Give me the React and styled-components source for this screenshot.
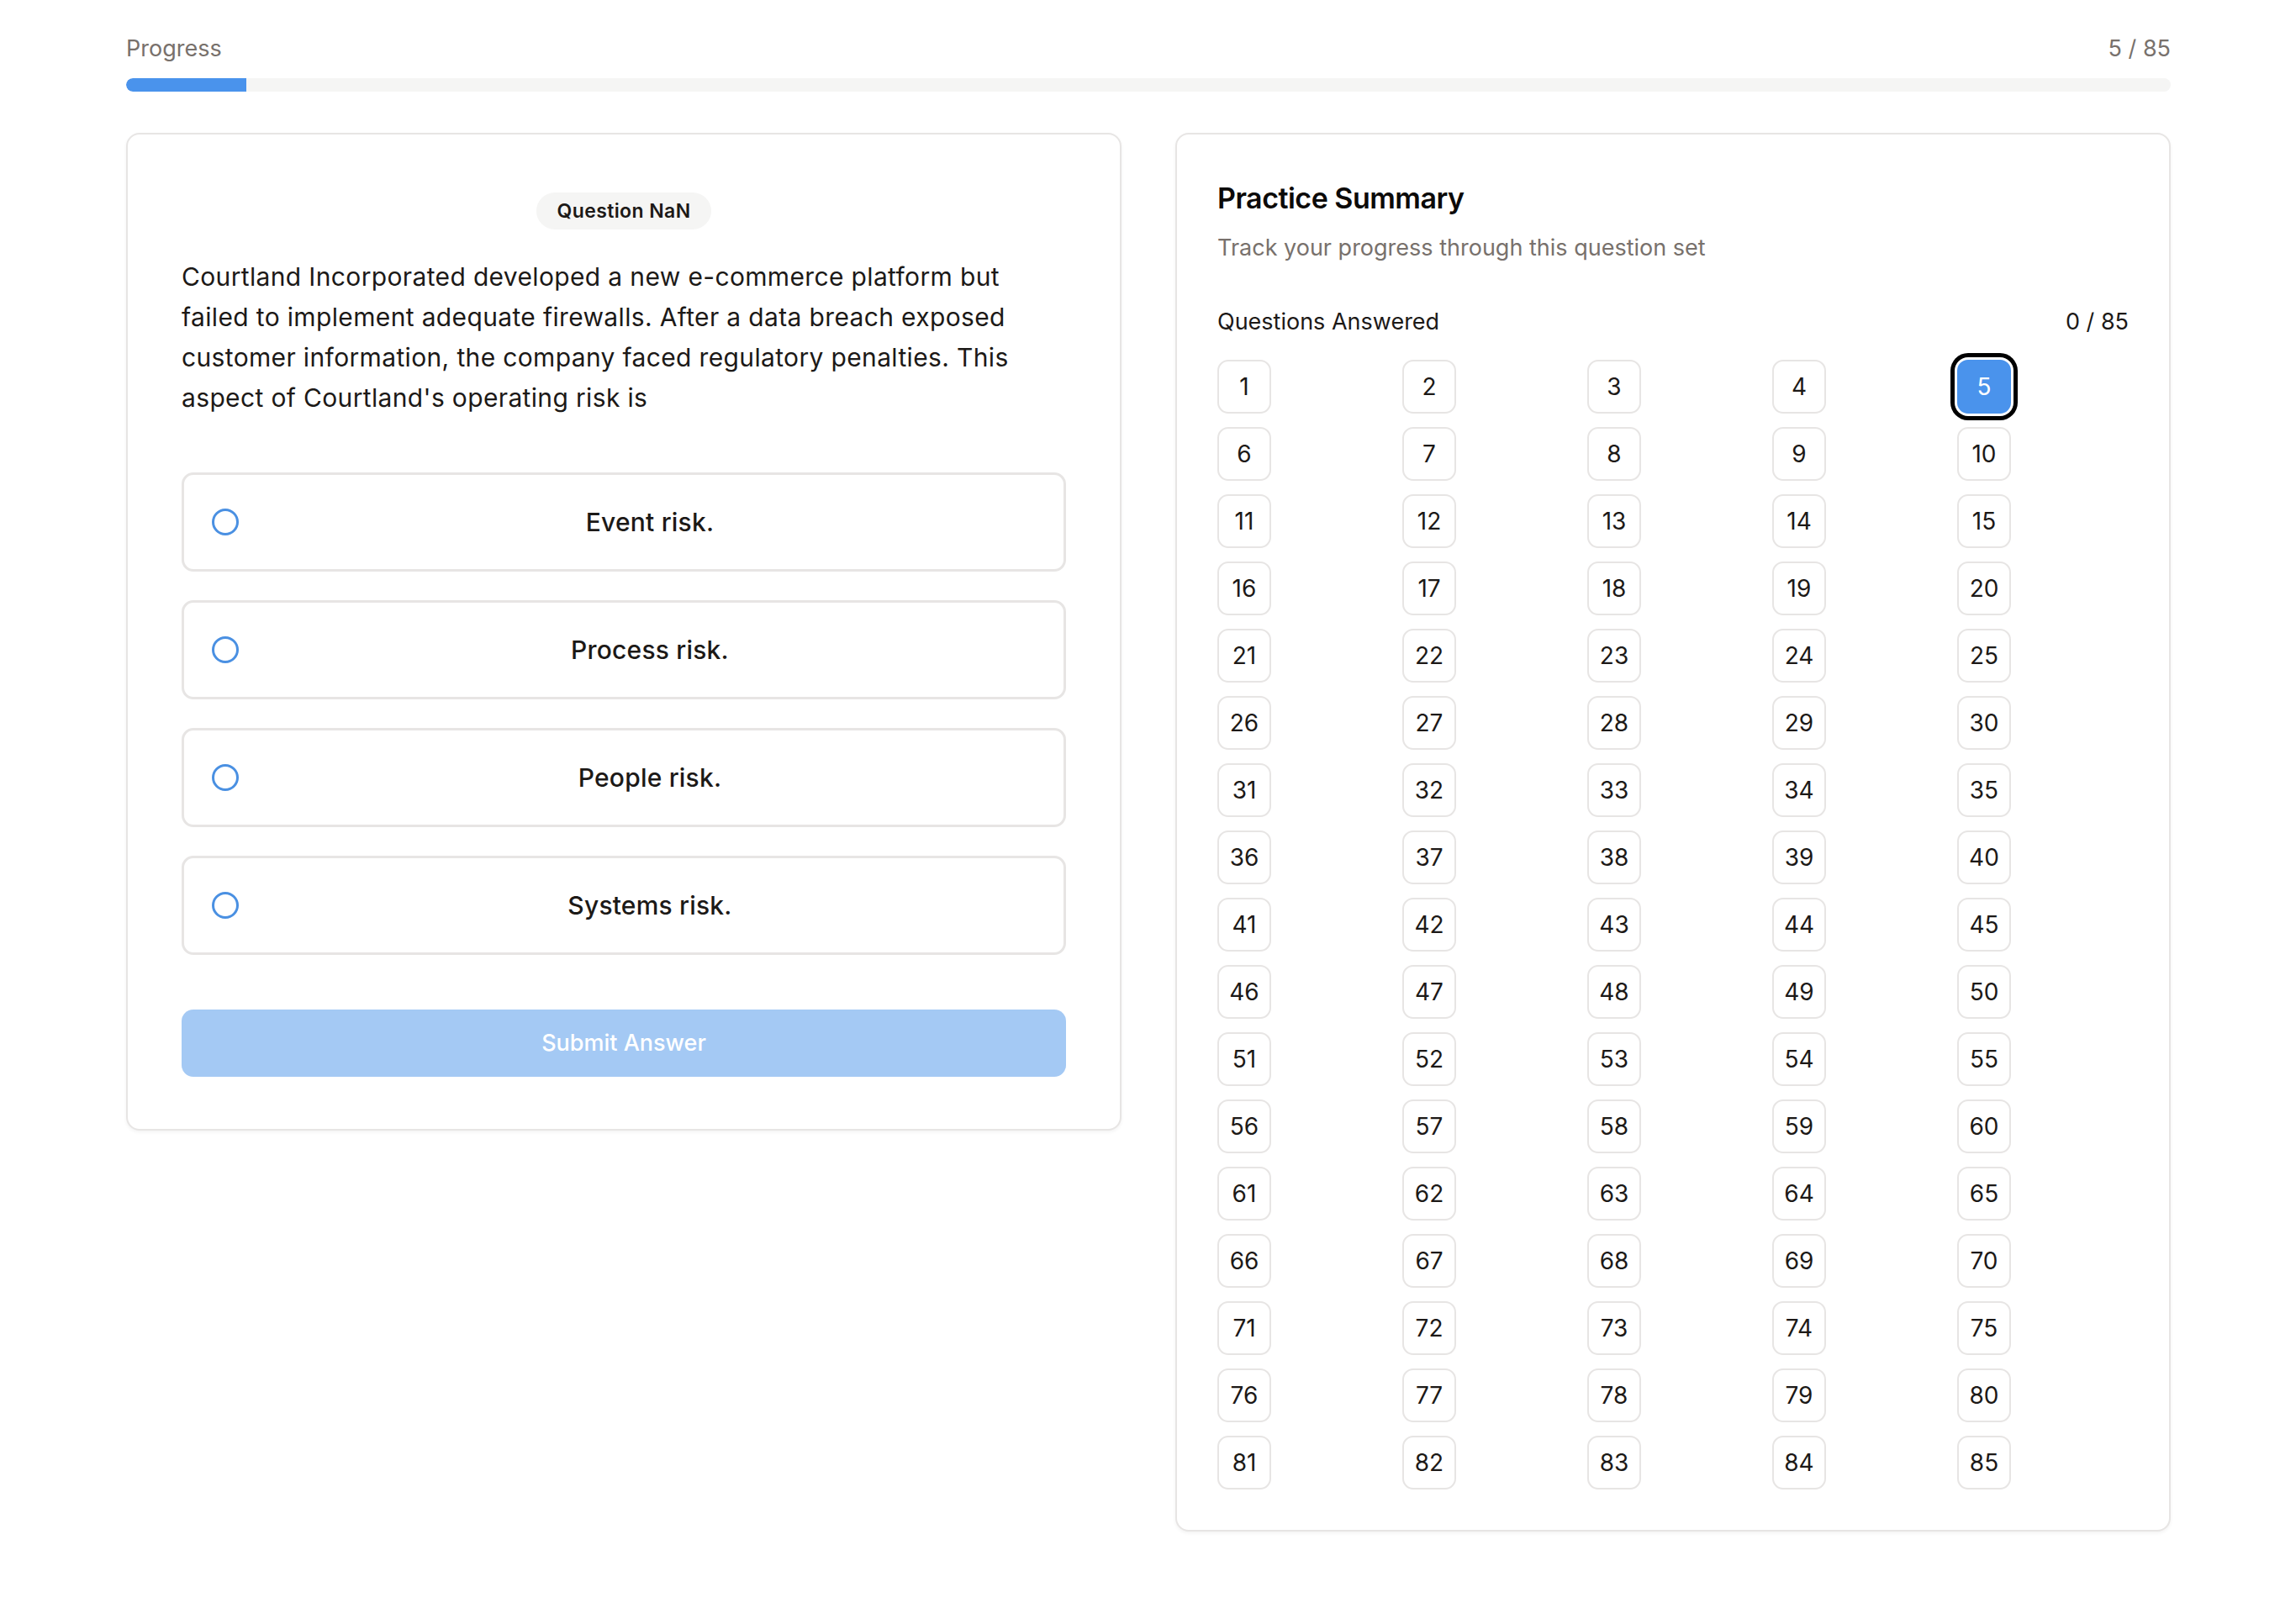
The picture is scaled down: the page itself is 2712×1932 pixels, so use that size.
import React from "react";
import styled, { createGlobalStyle, css } from "styled-components";

const GlobalStyle = createGlobalStyle`
    body{
        margin:0;
        background:#FFFFFF;
        font-family: Inter, "Noto Sans", "Liberation Sans", sans-serif;
        color:#1c1917;
    }
`;

const Page = styled.div`
    width:2432px;
    padding:38px 0 60px 150px;
`;

const ProgressHeader = styled.div`
    display:flex;
    justify-content:space-between;
    font-size:27px;
    line-height:40px;
    color:#78716c;
`;

const Track = styled.div`
    margin-top:15px;
    height:16px;
    border-radius:8px;
    background:#f5f5f4;
    overflow:hidden;
`;

const Fill = styled.div`
    height:100%;
    background:#4a93ec;
    border-radius:8px 0 0 8px;
`;

const Columns = styled.div`
    display:grid;
    grid-template-columns:1fr 1fr;
    column-gap:64px;
    align-items:start;
    margin-top:49px;
`;

const Card = styled.div`
    background:#FFFFFF;
    border:2px solid #e7e5e4;
    border-radius:16px;
    box-shadow: 0px 2px 4px rgba(0, 0, 0, 0.05);
`;

const QuestionCard = styled(Card)`
    padding:69px 64px 62px;
    display:flex;
    flex-direction:column;
`;

const Badge = styled.span`
    align-self:center;
    height:44px;
    padding:0 24px;
    border-radius:22px;
    background:#f5f5f4;
    font-size:23px;
    font-weight:600;
    letter-spacing:0.4px;
    line-height:44px;
    color:#1c1917;
`;

const QuestionText = styled.p`
    margin:32px 0 0;
    font-size:30px;
    letter-spacing:0.35px;
    line-height:48px;
    color:#1c1917;
`;

const Options = styled.div`
    margin-top:65px;
    display:flex;
    flex-direction:column;
    gap:34px;
`;

const Option = styled.label`
    height:118px;
    box-sizing:border-box;
    border:3px solid #e7e5e4;
    border-radius:14px;
    padding:0 33px;
    display:flex;
    align-items:center;
    gap:30px;
    cursor:pointer;
`;

const Radio = styled.span`
    width:32px;
    height:32px;
    box-sizing:border-box;
    border:3px solid #4a90e2;
    border-radius:50%;
    flex-shrink:0;
`;

const OptionText = styled.span`
    flex:1;
    text-align:center;
    font-size:30px;
    font-weight:500;
    letter-spacing:0.2px;
    color:#1c1917;
`;

const SubmitButton = styled.button`
    all:unset;
    margin-top:65px;
    height:80px;
    border-radius:14px;
    background:#a4c9f4;
    color:#FFFFFF;
    font-size:27px;
    font-weight:500;
    text-align:center;
    line-height:80px;
    cursor:not-allowed;
`;

const SummaryCard = styled(Card)`
    padding:52px 48px 48px;
`;

const Title = styled.h2`
    margin:0;
    font-size:34px;
    line-height:48px;
    font-weight:600;
    letter-spacing:-0.5px;
    color:#0c0a09;
`;

const Subtitle = styled.p`
    margin:15px 0 0;
    font-size:27px;
    line-height:40px;
    color:#78716c;
`;

const AnsweredRow = styled.div`
    margin-top:48px;
    display:flex;
    justify-content:space-between;
    font-size:27px;
    line-height:40px;
    color:#1c1917;
`;

const NumberGrid = styled.div`
    margin-top:25px;
    display:grid;
    grid-template-columns:repeat(5, 1fr);
    column-gap:16px;
    row-gap:16px;
`;

const NumberButton = styled.button`
    all:unset;
    box-sizing:border-box;
    width:64px;
    height:64px;
    border:2px solid #e7e5e4;
    border-radius:13px;
    display:flex;
    align-items:center;
    justify-content:center;
    font-family: Inter, "Noto Sans", "Liberation Sans", sans-serif;
    font-size:28px;
    color:#1c1917;
    cursor:pointer;

    ${(p) => p.$current && css`
        background:#4a93ec;
        border-color:#4a93ec;
        color:#FFFFFF;
        box-shadow: 0 0 0 3px #FFFFFF, 0 0 0 8px #000000;
    `}
`;

const options = ["Event risk.", "Process risk.", "People risk.", "Systems risk."];
const total = 85;
const current = 5;

const App = () => {
    return(
        <>
            <GlobalStyle />
            <Page>
                <ProgressHeader>
                    <span>Progress</span>
                    <span>{current} / {total}</span>
                </ProgressHeader>
                <Track>
                    <Fill style={{ width: `${(current / total) * 100}%` }} />
                </Track>

                <Columns>
                    <QuestionCard>
                        <Badge>Question NaN</Badge>
                        <QuestionText>
                            Courtland Incorporated developed a new e-commerce platform but failed to implement adequate firewalls. After a data breach exposed customer information, the company faced regulatory penalties. This aspect of Courtland's operating risk is
                        </QuestionText>
                        <Options>
                            {options.map((o) => (
                                <Option key={o}>
                                    <Radio />
                                    <OptionText>{o}</OptionText>
                                </Option>
                            ))}
                        </Options>
                        <SubmitButton disabled>Submit Answer</SubmitButton>
                    </QuestionCard>

                    <SummaryCard>
                        <Title>Practice Summary</Title>
                        <Subtitle>Track your progress through this question set</Subtitle>
                        <AnsweredRow>
                            <span>Questions Answered</span>
                            <span>0 / {total}</span>
                        </AnsweredRow>
                        <NumberGrid>
                            {Array.from({ length: total }, (_, i) => i + 1).map((n) => (
                                <NumberButton key={n} $current={n === current}>{n}</NumberButton>
                            ))}
                        </NumberGrid>
                    </SummaryCard>
                </Columns>
            </Page>
        </>
    );
};

export default App;
